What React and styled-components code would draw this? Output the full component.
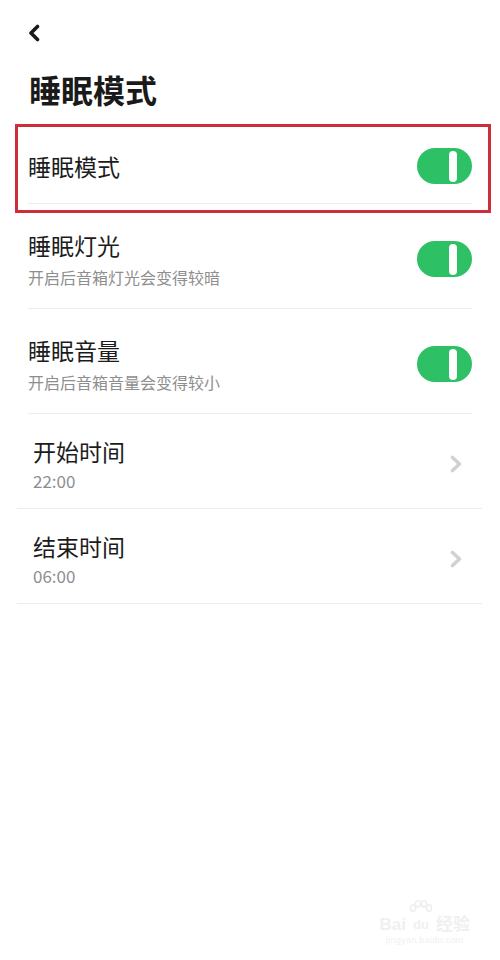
import React, { useState } from 'react';
import styled, { createGlobalStyle } from 'styled-components';

const GlobalStyle = createGlobalStyle`
  html, body {
    margin: 0;
    padding: 0;
    background: #ffffff;
  }
  body {
    font-family: "Noto Sans CJK SC", "Noto Sans", sans-serif;
    color: #1c1c1c;
  }
`;

const toggleRows = [
  { id: 'mode', title: '睡眠模式', highlight: true },
  { id: 'light', title: '睡眠灯光', desc: '开启后音箱灯光会变得较暗' },
  { id: 'volume', title: '睡眠音量', desc: '开启后音箱音量会变得较小' },
];

const timeRows = [
  { id: 'start', title: '开始时间', value: '22:00' },
  { id: 'end', title: '结束时间', value: '06:00' },
];

const BackIcon = () => (
  <svg width="12" height="18" viewBox="0 0 12 18">
    <path
      d="M9.5 2.5 L3 9 L9.5 15.5"
      fill="none"
      stroke="#1a1a1a"
      strokeWidth="3.6"
      strokeLinecap="round"
      strokeLinejoin="round"
    />
  </svg>
);

const ArrowIcon = () => (
  <svg width="14" height="18" viewBox="0 0 14 18">
    <path
      d="M3.5 2.5 L10.5 9 L3.5 15.5"
      fill="none"
      stroke="#d0d1d5"
      strokeWidth="3.6"
      strokeLinecap="round"
      strokeLinejoin="round"
    />
  </svg>
);

const PawIcon = () => (
  <svg width="26" height="16" viewBox="0 0 26 16">
    <g fill="none" stroke="#eeeeee" strokeWidth="1.5">
      <ellipse cx="5" cy="8" rx="2.6" ry="3.2" />
      <ellipse cx="10" cy="3.8" rx="2.6" ry="3.2" />
      <ellipse cx="16" cy="3.8" rx="2.6" ry="3.2" />
      <ellipse cx="21" cy="8" rx="2.6" ry="3.2" />
    </g>
  </svg>
);

const SleepSettings = () => {
  const [state, setState] = useState({ mode: true, light: true, volume: true });

  const flip = id => {
    setState(prev => ({ ...prev, [id]: !prev[id] }));
  };

  return (
    <Page>
      <Header>
        <BackButton>
          <BackIcon />
        </BackButton>
        <PageTitle>睡眠模式</PageTitle>
      </Header>

      <ToggleList>
        {toggleRows.map(row => (
          <ToggleRow key={row.id} hasDesc={!!row.desc}>
            <TextBlock>
              <RowTitle>{row.title}</RowTitle>
              {row.desc && <RowDesc>{row.desc}</RowDesc>}
            </TextBlock>
            <Switch on={state[row.id]} onClick={() => flip(row.id)}>
              <Knob />
            </Switch>
            {row.highlight && <Highlight />}
          </ToggleRow>
        ))}
      </ToggleList>

      <TimeList>
        {timeRows.map(row => (
          <TimeRow key={row.id}>
            <TextBlock tight>
              <TimeTitle>{row.title}</TimeTitle>
              <TimeValue>{row.value}</TimeValue>
            </TextBlock>
            <ArrowIcon />
          </TimeRow>
        ))}
      </TimeList>

      <Watermark>
        <MarkTop>
          <MarkWord>Bai</MarkWord>
          <MarkPaw>
            <PawIcon />
            <MarkWord small>du</MarkWord>
          </MarkPaw>
          <MarkWord>经验</MarkWord>
        </MarkTop>
        <MarkUrl>jingyan.baidu.com</MarkUrl>
      </Watermark>
    </Page>
  );
};

export default function App() {
  return (
    <>
      <GlobalStyle />
      <SleepSettings />
    </>
  );
}

const Page = styled.div`
  width: 500px;
  min-height: 960px;
  display: flex;
  flex-direction: column;
  box-sizing: border-box;
`;

const Header = styled.div`
  display: flex;
  flex-direction: column;
  padding: 24px 28px 0 28px;
`;

const BackButton = styled.div`
  width: 12px;
  height: 18px;
  display: flex;
  cursor: pointer;
`;

const PageTitle = styled.h1`
  margin: 27px 0 18px 1px;
  font-size: 32px;
  line-height: 40px;
  font-weight: 700;
  color: #1a1a1a;
`;

const ToggleList = styled.div`
  display: flex;
  flex-direction: column;
  padding: 0 28px;
`;

const ToggleRow = styled.div`
  position: relative;
  display: flex;
  align-items: center;
  justify-content: space-between;
  box-sizing: border-box;
  height: ${props => (props.hasDesc ? '105px' : '77px')};
  padding: ${props => (props.hasDesc ? '6px 0 0 0' : '2px 0 0 0')};
  border-bottom: 1px solid #ededed;
`;

const Highlight = styled.div`
  position: absolute;
  top: -3px;
  bottom: -10px;
  left: -13px;
  right: -19px;
  border: 3px solid #cc2f3a;
  pointer-events: none;
`;

const TextBlock = styled.div`
  display: flex;
  flex-direction: column;
  gap: ${props => (props.tight ? '0' : '4px')};
`;

const RowTitle = styled.div`
  font-size: 23px;
  line-height: 30px;
  color: #1c1c1c;
`;

const TimeTitle = styled(RowTitle)`
  line-height: 33px;
`;

const RowDesc = styled.div`
  font-size: 16px;
  line-height: 22px;
  color: #8e8e8e;
  margin-top: 2px;
`;

const Switch = styled.div`
  width: 55px;
  height: 36px;
  border-radius: 18px;
  background: ${props => (props.on ? '#2dc064' : '#d6d6d6')};
  display: flex;
  align-items: center;
  justify-content: ${props => (props.on ? 'flex-end' : 'flex-start')};
  padding: 0 15px;
  box-sizing: border-box;
  cursor: pointer;
  flex-shrink: 0;
`;

const Knob = styled.div`
  width: 8px;
  height: 31px;
  border-radius: 4px;
  background: #ffffff;
`;

const TimeList = styled.div`
  display: flex;
  flex-direction: column;
  margin: 0 18px 0 17px;
`;

const TimeRow = styled.div`
  display: flex;
  align-items: center;
  justify-content: space-between;
  box-sizing: border-box;
  height: 95px;
  padding: 5px 19px 0 16px;
  border-bottom: 1px solid #ededed;
`;

const TimeValue = styled.div`
  font-size: 17px;
  line-height: 25px;
  color: #8e8e8e;
`;

const Watermark = styled.div`
  margin-top: auto;
  margin-bottom: 14px;
  align-self: flex-end;
  margin-right: 30px;
  display: flex;
  flex-direction: column;
  align-items: center;
`;

const MarkTop = styled.div`
  display: flex;
  align-items: flex-end;
  gap: 2px;
`;

const MarkPaw = styled.div`
  display: flex;
  flex-direction: column;
  align-items: center;
`;

const MarkWord = styled.span`
  font-family: "Liberation Sans", "Noto Sans CJK SC", sans-serif;
  font-weight: 700;
  font-size: ${props => (props.small ? '13px' : '17px')};
  line-height: 18px;
  color: #f0f0f0;
`;

const MarkUrl = styled.div`
  font-family: "Liberation Sans", sans-serif;
  font-size: 9px;
  line-height: 12px;
  color: #f0f0f0;
  letter-spacing: 0.3px;
`;
